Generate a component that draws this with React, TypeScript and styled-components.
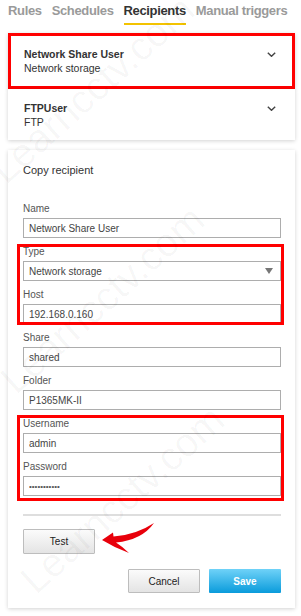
import styled, { createGlobalStyle } from 'styled-components';

const GlobalStyle = createGlobalStyle`
    html, body {
        margin: 0;
        padding: 0;
        background: #ffffff;
        font-family: "Liberation Sans", Arial, sans-serif;
    }
`

const Page = styled.div`
    position: relative;
    width: 301px;
    height: 616px;
    overflow: hidden;
    padding: 0 6px 0 8px;
    box-sizing: border-box;
    background: #ffffff;
`

const TabBar = styled.div`
    display: flex;
    gap: 10px;
    margin-bottom: 8px;
`

const Tab = styled.div<{ $active?: boolean }>`
    font-size: 13px;
    font-weight: bold;
    letter-spacing: -0.35px;
    line-height: 16px;
    padding: 3px 0 4px;
    color: ${p => (p.$active ? '#333333' : '#9a9a9a')};
    border-bottom: 2px solid ${p => (p.$active ? '#f3c300' : 'transparent')};
    white-space: nowrap;
`

const RecipientCard = styled.div<{ $marked?: boolean }>`
    display: flex;
    align-items: flex-start;
    justify-content: space-between;
    background: #ffffff;
    box-sizing: border-box;
    border: ${p => (p.$marked ? '3px solid #ff0000' : 'none')};
    padding: ${p => (p.$marked ? '11px 13px' : '12px 16px 11px')};
    box-shadow: 0 1px 4px rgba(0, 0, 0, 0.18);
    position: relative;
`

const CardText = styled.div`
    display: flex;
    flex-direction: column;
    font-size: 10.5px;
    line-height: 14px;
    color: #333333;
`

const CardTitle = styled.span`
    font-weight: bold;
`

const Chevron = styled.svg`
    margin-top: 5px;
    margin-right: 3px;
`

const FormCard = styled.div`
    margin-top: 10px;
    background: #ffffff;
    box-shadow: 0 1px 4px rgba(0, 0, 0, 0.18);
    padding: 13px 14px 15px 15px;
    display: flex;
    flex-direction: column;
`

const Heading = styled.div`
    font-size: 11px;
    line-height: 14px;
    color: #333333;
    margin-bottom: 25px;
`

const Fields = styled.div`
    display: flex;
    flex-direction: column;
    gap: 7px;
`

const Highlight = styled.div<{ $top: number; $bottom: number }>`
    position: relative;
    display: flex;
    flex-direction: column;
    gap: 7px;

    &::after {
        content: '';
        position: absolute;
        top: ${p => p.$top}px;
        bottom: ${p => p.$bottom}px;
        left: -6px;
        right: -3px;
        border: 3px solid #ff0000;
        pointer-events: none;
    }
`

const Field = styled.label`
    display: flex;
    flex-direction: column;
`

const Label = styled.span`
    font-size: 10px;
    line-height: 13px;
    color: #555555;
    margin-bottom: 3px;
`

const Input = styled.input`
    height: 20px;
    box-sizing: border-box;
    border: 1px solid #adadad;
    border-radius: 0;
    padding: 0 5px;
    font-family: "Liberation Sans", Arial, sans-serif;
    font-size: 10px;
    color: #444444;
    background: #ffffff;
    outline: none;
    width: 100%;
`

const PasswordInput = styled(Input)`
    font-size: 8px;
    color: #555555;
`

const Select = styled.div`
    height: 20px;
    box-sizing: border-box;
    border: 1px solid #adadad;
    padding: 0 7px 0 5px;
    font-size: 10px;
    color: #444444;
    display: flex;
    align-items: center;
    justify-content: space-between;
`

const Divider = styled.div`
    height: 2px;
    background: #dedede;
    margin: 18px 0 13px;
`

const TestRow = styled.div`
    position: relative;
    display: flex;
`

const Button = styled.button<{ $primary?: boolean }>`
    width: 72px;
    height: 24px;
    box-sizing: border-box;
    border-radius: 1px;
    font-family: "Liberation Sans", Arial, sans-serif;
    font-size: 10px;
    cursor: pointer;
    padding: 0;
    color: ${p => (p.$primary ? '#ffffff' : '#222222')};
    font-weight: ${p => (p.$primary ? 'bold' : 'normal')};
    border: ${p => (p.$primary ? 'none' : '1px solid #bdbdbd')};
    background: ${p =>
        p.$primary
            ? 'linear-gradient(#6fd2f8, #0a9bdb)'
            : 'linear-gradient(#fbfbfb, #e4e4e4)'};
`

const TestButton = styled(Button)`
    height: 25px;
`

const Arrow = styled.svg`
    position: absolute;
    left: 77px;
    top: -9px;
    pointer-events: none;
`

const Actions = styled.div`
    display: flex;
    justify-content: flex-end;
    gap: 9px;
    margin-top: 15px;
`

const Watermark = styled.div`
    position: absolute;
    inset: 0;
    pointer-events: none;
    overflow: hidden;
`

const Mark = styled.span`
    position: absolute;
    font-size: 40px;
    line-height: 40px;
    color: rgba(0, 0, 0, 0.035);
    transform: rotate(-42deg);
    transform-origin: left bottom;
    white-space: nowrap;
`

const ChevronIcon = () => (
    <Chevron width="9" height="5" viewBox="0 0 9 5">
        <path d="M0.8 0.8l3.7 3.5 3.7-3.5" fill="none" stroke="#444" strokeWidth="1.4" />
    </Chevron>
)

const recipients = [
    { name: 'Network Share User', type: 'Network storage', marked: true },
    { name: 'FTPUser', type: 'FTP', marked: false },
]

const watermarks = [
    { left: 10, top: 150 },
    { left: 20, top: 360 },
    { left: 40, top: 560 },
]

const App = () => {
    return (
        <>
            <GlobalStyle />
            <Page>
                <TabBar>
                    <Tab>Rules</Tab>
                    <Tab>Schedules</Tab>
                    <Tab $active>Recipients</Tab>
                    <Tab>Manual triggers</Tab>
                </TabBar>

                {recipients.map(r => (
                    <RecipientCard key={r.name} $marked={r.marked}>
                        <CardText>
                            <CardTitle>{r.name}</CardTitle>
                            <span>{r.type}</span>
                        </CardText>
                        <ChevronIcon />
                    </RecipientCard>
                ))}

                <FormCard>
                    <Heading>Copy recipient</Heading>
                    <Fields>
                        <Field>
                            <Label>Name</Label>
                            <Input defaultValue="Network Share User" />
                        </Field>
                        <Highlight $top={-1} $bottom={-1}>
                            <Field>
                                <Label>Type</Label>
                                <Select>
                                    <span>Network storage</span>
                                    <svg width="8" height="6" viewBox="0 0 8 6">
                                        <path d="M0 0h8L4 6z" fill="#777" />
                                    </svg>
                                </Select>
                            </Field>
                            <Field>
                                <Label>Host</Label>
                                <Input defaultValue="192.168.0.160" />
                            </Field>
                        </Highlight>
                        <Field>
                            <Label>Share</Label>
                            <Input defaultValue="shared" />
                        </Field>
                        <Field>
                            <Label>Folder</Label>
                            <Input defaultValue="P1365MK-II" />
                        </Field>
                        <Highlight $top={-2} $bottom={-5}>
                            <Field>
                                <Label>Username</Label>
                                <Input defaultValue="admin" />
                            </Field>
                            <Field>
                                <Label>Password</Label>
                                <PasswordInput type="password" defaultValue="12345678901" />
                            </Field>
                        </Highlight>
                    </Fields>

                    <Divider />

                    <TestRow>
                        <TestButton>Test</TestButton>
                        {/* annotation arrow pointing at the Test button */}
                        <Arrow width="56" height="36" viewBox="0 0 56 36">
                            <path
                                d="M2 20 L13 12.5 L13.5 16.5 Q36 15 54 3 Q42 20 16 22.5 Q23 27 29 33 Q15 28 2 20 Z"
                                fill="#e8000b"
                            />
                        </Arrow>
                    </TestRow>

                    <Actions>
                        <Button>Cancel</Button>
                        <Button $primary>Save</Button>
                    </Actions>
                </FormCard>

                <Watermark>
                    {watermarks.map((w, i) => (
                        <Mark key={i} style={{ left: w.left, top: w.top }}>
                            Learncctv.com
                        </Mark>
                    ))}
                </Watermark>
            </Page>
        </>
    )
}

export default App
